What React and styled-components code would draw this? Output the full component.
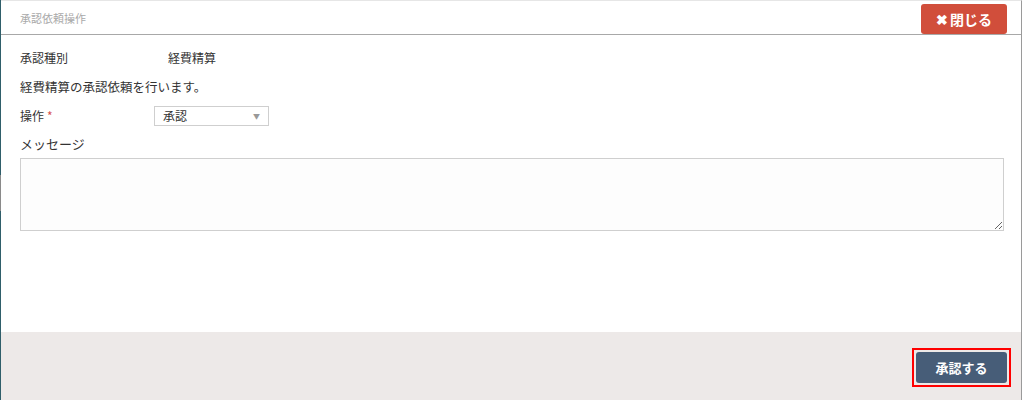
import React from "react";
import styled, { createGlobalStyle } from "styled-components";

const GlobalStyle = createGlobalStyle`
  html, body {
    margin: 0;
    padding: 0;
    background: #fff;
  }
  body {
    font-family: "Noto Sans CJK JP", "Noto Sans", sans-serif;
    color: #333;
  }
`;

const Frame = styled.div`
  width: 1024px;
  height: 400px;
  display: flex;
  background: #fff;
`;

const Edge = styled.div`
  width: 1px;
  background: linear-gradient(
    to bottom,
    #2f5e6a 0,
    #2f5e6a 175px,
    #8a8a8a 175px,
    #8a8a8a 211px,
    #2f5e6a 211px
  );
`;

const Modal = styled.div`
  flex: 1;
  display: flex;
  flex-direction: column;
  border-top: 1px solid #e6e6e6;
  border-right: 1px solid #9a9a9a;
  margin-right: 2px;
`;

const Header = styled.div`
  height: 33px;
  display: flex;
  align-items: center;
  justify-content: space-between;
  padding: 0 14px 0 19px;
  border-bottom: 1px solid #a8a8a8;
`;

const Title = styled.span`
  font-size: 11px;
  color: #a9a9a9;
`;

const CloseButton = styled.button`
  height: 30px;
  padding: 0 15px;
  margin-top: 2px;
  border: none;
  border-radius: 3px;
  background: #d14e3b;
  color: #fff;
  font-family: inherit;
  font-size: 14px;
  font-weight: 700;
  display: flex;
  align-items: center;
  gap: 2px;
`;

const Body = styled.div`
  flex: 1;
  padding: 8px 17px 0 19px;
`;

const Row = styled.div`
  display: flex;
  align-items: center;
  height: 29px;
  font-size: ${(p) => p.fs || 12}px;
`;

const Label = styled.div`
  width: ${(p) => (p.wide ? 148 : 134)}px;
`;

const Required = styled.span`
  color: #d9534f;
  margin-left: 3px;
`;

const Select = styled.div`
  width: 115px;
  height: 20px;
  border: 1px solid #cfcfcf;
  display: flex;
  align-items: center;
  justify-content: space-between;
  padding: 0 8px 0 8px;
  box-sizing: border-box;
  font-size: 12px;
  color: #333;
`;

const Caret = styled.span`
  font-size: 7px;
  color: #999;
`;

const MessageLabel = styled.div`
  font-size: 13px;
  margin-top: 4px;
  height: 20px;
`;

const TextArea = styled.textarea`
  display: block;
  width: 984px;
  height: 73px;
  box-sizing: border-box;
  margin-top: 4px;
  border: 1px solid #cfcfcf;
  background: #fdfdfd;
  resize: vertical;
  outline: none;
`;

const Footer = styled.div`
  height: 68px;
  background: #ede9e8;
  display: flex;
  align-items: center;
  justify-content: flex-end;
  padding-right: 10px;
`;

const Highlight = styled.div`
  border: 2px solid #f00;
  padding: 2px;
  margin-top: 2px;
`;

const SubmitButton = styled.button`
  width: 91px;
  height: 31px;
  border: none;
  border-radius: 3px;
  background: #475d78;
  color: #fff;
  font-family: inherit;
  font-size: 13px;
  font-weight: 700;
`;

export default function App() {
  return (
    <>
      <GlobalStyle />
      <Frame>
        <Edge />
        <Modal>
          <Header>
            <Title>承認依頼操作</Title>
            <CloseButton>
              <span>✖</span>閉じる
            </CloseButton>
          </Header>
          <Body>
            <Row>
              <Label wide>承認種別</Label>
              <span>経費精算</span>
            </Row>
            <Row fs={12.5}>経費精算の承認依頼を行います。</Row>
            <Row>
              <Label>
                操作<Required>*</Required>
              </Label>
              <Select>
                <span>承認</span>
                <Caret>▼</Caret>
              </Select>
            </Row>
            <MessageLabel>メッセージ</MessageLabel>
            <TextArea />
          </Body>
          <Footer>
            <Highlight>
              <SubmitButton>承認する</SubmitButton>
            </Highlight>
          </Footer>
        </Modal>
      </Frame>
    </>
  );
}
